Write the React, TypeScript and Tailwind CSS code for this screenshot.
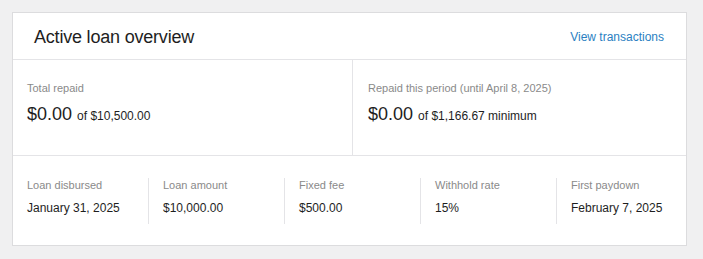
const DETAILS: { label: string; value: string }[] = [
  { label: "Loan disbursed", value: "January 31, 2025" },
  { label: "Loan amount", value: "$10,000.00" },
  { label: "Fixed fee", value: "$500.00" },
  { label: "Withhold rate", value: "15%" },
  { label: "First paydown", value: "February 7, 2025" },
];

export default function App() {
  return (
    <div className="min-h-[259px] bg-[#f0f0f1] pt-[12px] pl-[12px] pr-[16px] pb-[13px] font-['Liberation_Sans',Arial,sans-serif] text-[#1e1e1e]">
      <div className="border border-[#dcdcde] bg-white">
        {/* header */}
        <div className="flex h-[47px] items-center justify-between border-b border-[#e4e4e7] pl-[21px] pr-[22px]">
          <h2 className="pt-[2px] text-[18px] leading-[24px] tracking-[-0.2px]">Active loan overview</h2>
          <a href="#" className="pt-[2px] text-[12px] leading-[16px] text-[#2b7fc2]">
            View transactions
          </a>
        </div>

        {/* repaid totals */}
        <div className="flex border-b border-[#e4e4e7]">
          <div className="w-[340px] shrink-0 border-r border-[#e4e4e7] pl-[14px] pt-[21px] pb-[27px]">
            <p className="text-[11px] leading-[14px] text-[#8a8a8a]">Total repaid</p>
            <p className="mt-[7px] text-[18px] leading-[24px]">
              $0.00 <span className="text-[12px]">of $10,500.00</span>
            </p>
          </div>
          <div className="flex-1 pl-[15px] pt-[21px] pb-[27px]">
            <p className="text-[11px] leading-[14px] text-[#8a8a8a]">Repaid this period (until April 8, 2025)</p>
            <p className="mt-[7px] text-[18px] leading-[24px]">
              $0.00 <span className="text-[12px]">of $1,166.67 minimum</span>
            </p>
          </div>
        </div>

        {/* loan details */}
        <div className="flex pl-[14px] pt-[22px] pb-[21px]">
          {DETAILS.map((d, i) => (
            <div
              key={d.label}
              className={
                i === 0
                  ? "w-[121px] shrink-0 pb-[8px]"
                  : i === DETAILS.length - 1
                    ? "min-w-0 flex-1 border-l border-[#e4e4e7] pl-[14px] pb-[8px]"
                    : "w-[136px] shrink-0 border-l border-[#e4e4e7] pl-[14px] pb-[8px]"
              }
            >
              <p className="text-[11px] leading-[14px] text-[#8a8a8a]">{d.label}</p>
              <p className="mt-[8px] text-[12px] leading-[16px]">{d.value}</p>
            </div>
          ))}
        </div>
      </div>
    </div>
  );
}
